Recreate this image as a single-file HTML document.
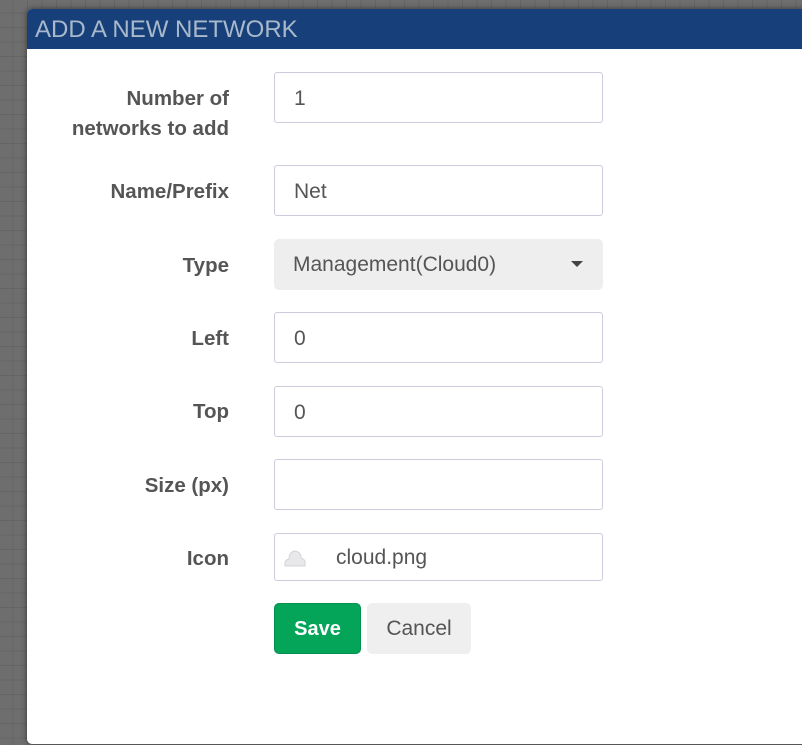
<!DOCTYPE html>
<html><head><style>
html,body{margin:0;padding:0;width:802px;height:745px;overflow:hidden}
body{background-color:#6e6e6e;background-image:linear-gradient(#656565 1px,transparent 1px),linear-gradient(90deg,#656565 1px,transparent 1px);background-size:14.5px 14.5px;background-position:-2px -2px;font-family:"Liberation Sans",sans-serif;position:relative}
.dlg{position:absolute;left:27px;top:9px;width:800px;height:735px;background:#fff;border-radius:5px 0 0 5px;overflow:hidden;box-shadow:0 0 6px rgba(0,0,0,.5)}
.hd{height:40px;background:#17407b;color:#a9b9cb;font-size:24px;line-height:41px;padding-left:8px}
.lbl{position:absolute;right:598px;text-align:right;font-weight:bold;color:#555;font-size:20.5px;line-height:30px;white-space:nowrap}
.in{position:absolute;left:247px;width:329px;height:51px;border:1px solid #ccd;border-radius:3px;box-sizing:border-box;font-size:21px;color:#555;line-height:51px;padding-left:19px}
.sel{background:#eee;border:none;border-radius:5px}
.btn{position:absolute;top:594px;height:51px;border-radius:5px;font-size:21px;line-height:51px;text-align:center;box-sizing:border-box}
</style></head><body>
<div class="dlg">
<div class="hd">ADD A NEW NETWORK</div>
<div class="lbl" style="top:75px">Number of<br>networks to add</div>
<div class="in" style="top:63px">1</div>
<div class="lbl" style="top:168px">Name/Prefix</div>
<div class="in" style="top:156px">Net</div>
<div class="lbl" style="top:242px">Type</div>
<div class="in sel" style="top:230px">Management(Cloud0)<span style="position:absolute;right:20px;top:22px;border-left:6px solid transparent;border-right:6px solid transparent;border-top:6px solid #444"></span></div>
<div class="lbl" style="top:315px">Left</div>
<div class="in" style="top:303px">0</div>
<div class="lbl" style="top:388px">Top</div>
<div class="in" style="top:377px">0</div>
<div class="lbl" style="top:462px">Size (px)</div>
<div class="in" style="top:450px"></div>
<div class="lbl" style="top:535px">Icon</div>
<div class="in" style="top:524px;height:48px;line-height:48px;padding-left:61px">cloud.png
<svg style="position:absolute;left:8px;top:12px" width="24" height="24" viewBox="0 0 24 24"><path d="M2 20 Q1 14 6 13 Q6 6 12 5 Q18 6 18 12 Q23 13 22 20 Z" fill="#e8e8ea" stroke="#d4d4d8"/></svg></div>
<div class="btn" style="left:247px;width:87px;background:#04a559;color:#fff;border:1px solid #03904d;font-weight:bold;font-size:20px">Save</div>
<div class="btn" style="left:340px;width:104px;background:#efefef;color:#555">Cancel</div>
</div>
</body></html>
